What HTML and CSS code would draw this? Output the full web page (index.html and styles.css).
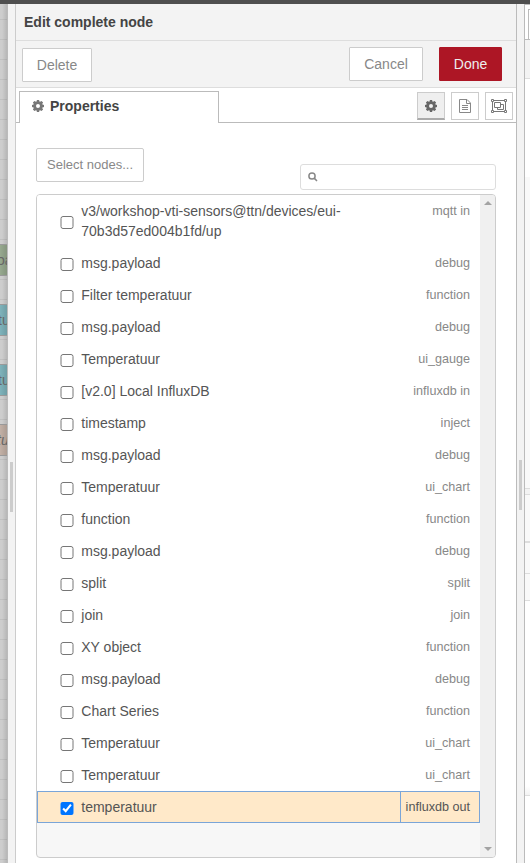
FILE: index.html
```html
<!DOCTYPE html>
<html lang="en">
<head>
<meta charset="utf-8">
<title>Edit complete node</title>
<link rel="stylesheet" href="styles.css">
</head>
<body>
<div class="topbar"></div>
<div class="workspace">
  <div class="canvas">
    <span class="flow-node green">oa</span>
    <span class="flow-node teal">tu</span>
    <span class="flow-node teal second">tu</span>
    <span class="flow-node tan">tu</span>
  </div>
  <div class="separator left"><i class="grip"></i></div>
  <main class="tray">
    <header class="title">Edit complete node</header>
    <div class="toolbar">
      <button class="btn delete">Delete</button>
      <button class="btn cancel">Cancel</button>
      <button class="btn done">Done</button>
    </div>
    <div class="tabs">
      <div class="tab-gap"></div>
      <div class="tab"><svg class="gear" viewBox="0 0 12 12"><use href="#gear"/></svg>Properties</div>
      <div class="tab-actions">
        <span class="icon-btn active"><svg class="gear" viewBox="0 0 12 12"><path id="gear" fill-rule="evenodd" d="M4.900 0h2.200l.3 1.500.7.300L9.500.9 11.100 2.500l-.9 1.400.3.700 1.500.300v2.200l-1.500.300-.3.700.9 1.400-1.600 1.600-1.400-.9-.7.300-.3 1.500H4.900l-.3-1.500-.7-.300-1.400.9L.9 9.500l.9-1.400-.3-.700L0 7.100V4.900l1.500-.300.3-.700L.9 2.500 2.500.9l1.400.9.7-.300zM6 4a2 2 0 1 0 0 4a2 2 0 1 0 0-4z"/></svg></span>
        <span class="icon-btn"><svg class="doc" viewBox="0 0 12 14"><path d="M.5.5h7.500l3.500 3.500v9.500H.5zM7.500.5v4h4M3 6.500h6M3 8.500h6M3 10.500h6"/></svg></span>
        <span class="icon-btn"><svg class="group" viewBox="0 0 16 14"><path d="M2 1.500h12M2 12.500h12M1.500 2v10M14.500 2v10M.5.5h2v2h-2zM13.500.5h2v2h-2zM.5 11.500h2v2h-2zM13.500 11.500h2v2h-2zM3.500 3.500h6v5h-6zM9.500 5.500h3v5h-6v-2"/></svg></span>
      </div>
    </div>
    <section class="content">
      <div class="controls">
        <button class="btn select">Select nodes...</button>
        <div class="search"><svg viewBox="0 0 10 10"><circle cx="4" cy="4" r="3.100"/><path d="M6.400 6.400L9 9"/></svg></div>
      </div>
      <div class="list">
        <div class="rows">
          <label class="row tall"><input type="checkbox"><span class="name">v3/workshop-vti-sensors@ttn/devices/eui-70b3d57ed004b1fd/up</span><span class="type">mqtt in</span></label>
          <label class="row"><input type="checkbox"><span class="name">msg.payload</span><span class="type">debug</span></label>
          <label class="row"><input type="checkbox"><span class="name">Filter temperatuur</span><span class="type">function</span></label>
          <label class="row"><input type="checkbox"><span class="name">msg.payload</span><span class="type">debug</span></label>
          <label class="row"><input type="checkbox"><span class="name">Temperatuur</span><span class="type">ui_gauge</span></label>
          <label class="row"><input type="checkbox"><span class="name">[v2.0] Local InfluxDB</span><span class="type">influxdb in</span></label>
          <label class="row"><input type="checkbox"><span class="name">timestamp</span><span class="type">inject</span></label>
          <label class="row"><input type="checkbox"><span class="name">msg.payload</span><span class="type">debug</span></label>
          <label class="row"><input type="checkbox"><span class="name">Temperatuur</span><span class="type">ui_chart</span></label>
          <label class="row"><input type="checkbox"><span class="name">function</span><span class="type">function</span></label>
          <label class="row"><input type="checkbox"><span class="name">msg.payload</span><span class="type">debug</span></label>
          <label class="row"><input type="checkbox"><span class="name">split</span><span class="type">split</span></label>
          <label class="row"><input type="checkbox"><span class="name">join</span><span class="type">join</span></label>
          <label class="row"><input type="checkbox"><span class="name">XY object</span><span class="type">function</span></label>
          <label class="row"><input type="checkbox"><span class="name">msg.payload</span><span class="type">debug</span></label>
          <label class="row"><input type="checkbox"><span class="name">Chart Series</span><span class="type">function</span></label>
          <label class="row"><input type="checkbox"><span class="name">Temperatuur</span><span class="type">ui_chart</span></label>
          <label class="row"><input type="checkbox"><span class="name">Temperatuur</span><span class="type">ui_chart</span></label>
          <label class="row selected"><input type="checkbox" checked><span class="name">temperatuur</span><span class="type">influxdb out</span></label>
        </div>
        <div class="scrollbar"><i class="up"></i><i class="down"></i></div>
      </div>
    </section>
  </main>
  <div class="separator right"><i class="grip"></i></div>
  <aside class="sidebar">
    <div class="side-tabs"><i></i></div>
    <div class="side-tools"></div>
    <div class="side-blank"></div>
    <div class="side-tree"></div>
    <div class="side-gap"></div>
    <div class="side-head"></div>
    <div class="side-row"></div>
    <div class="side-row short"></div>
    <div class="side-info"></div>
    <div class="side-end"></div>
  </aside>
</div>
</body>
</html>
```
FILE: styles.css
```css
* { box-sizing: border-box; }
body { margin: 0; height: 863px; overflow: hidden; background: #fff; color: #555; font: 14px/20px "Liberation Sans", Arial, sans-serif; }
.topbar { height: 4px; background: #4f4f4f; }
.workspace { display: flex; height: 859px; }

.canvas { position: relative; flex: 0 0 8px; overflow: hidden; border-right: 1px solid #bbb; background: linear-gradient(90deg, transparent 2px, rgba(0,0,0,.11) 7px), repeating-linear-gradient(#cdcdcd 0 15px, #c0c0c0 15px 16px, #cdcdcd 16px 20px); }
.flow-node { position: absolute; left: -10px; top: 240px; width: 18px; height: 32px; padding: 5px 0 0 6px; border: 1px solid #999; color: #666; background: linear-gradient(90deg, transparent 9px, rgba(0,0,0,.12)), #97a98f; }
.flow-node.teal { top: 300px; padding-left: 7px; background-color: #7eb3bb; }
.flow-node.second { top: 360px; }
.flow-node.tan { top: 420px; padding-left: 6px; background-color: #c3b1a6; font-style: italic; }

.separator { flex: 0 0 8px; display: flex; align-items: center; background: #f3f3f3; }
.separator.left { border-right: 1px solid #ccc; }
.separator.right { flex-basis: 9px; border: solid #bbb; border-width: 0 1px; }
.grip { width: 3px; height: 50px; margin: 106px 0 0 2px; background: #ccc; }
.right .grip { margin-top: 102px; }

.tray { flex: 0 0 500px; height: 859px; background: #fff; }
.title { height: 37px; padding: 8px; border-bottom: 1px solid #ddd; background: #f3f3f3; color: #444; font-weight: bold; }
.toolbar { display: flex; height: 47px; padding: 6px 14px 0 6px; border-bottom: 1px solid #ddd; background: #f3f3f3; }
.btn { height: 34px; padding: 0; border: 1px solid #ccc; border-radius: 1px; background: #fff; color: #888; font: 14px/20px "Liberation Sans", Arial, sans-serif; }
.delete { width: 70px; margin: 1px auto 0 0; }
.cancel { width: 74px; margin-right: 16px; }
.done { width: 63px; border-color: #ad1625; background: #ad1625; color: #eee; }

.tabs { display: flex; height: 35px; }
.tab-gap { width: 3px; border-bottom: 1px solid #bbb; }
.tab { display: flex; align-items: center; gap: 6px; width: 200px; height: 32px; margin-top: 3px; padding: 0 0 3px 12px; border: 1px solid #bbb; border-bottom: 0; color: #444; font-weight: bold; }
.gear { width: 12px; height: 12px; fill: #777; }
.tab-actions { display: flex; flex: 1; justify-content: flex-end; gap: 6px; padding: 4px 3px 0 0; border-bottom: 1px solid #bbb; }
.icon-btn { display: flex; align-items: center; justify-content: center; width: 28px; height: 28px; border: 1px solid #ccc; }
.icon-btn.active { border-bottom: 2px solid #aaa; background: #efefef; }
.icon-btn .gear { fill: #666; }
.doc { width: 12px; height: 14px; fill: none; stroke: #888; }
.group { width: 16px; height: 14px; fill: none; stroke: #777; }

.content { padding: 25px 20px 0; }
.controls { display: flex; justify-content: space-between; height: 46px; }
.select { width: 108px; border-radius: 2px; font-size: 13px; }
.search { display: flex; align-items: center; width: 196px; height: 26px; margin-top: 16px; padding-left: 7px; border: 1px solid #ddd; border-radius: 3px; }
.search svg { width: 10px; height: 10px; fill: none; stroke: #888; stroke-width: 1.5; }
.list { display: flex; width: 460px; height: 664px; overflow: hidden; border: 1px solid #ccc; border-radius: 4px; background: #f7f7f7; }
.rows { flex: 1; }
.row { display: flex; align-items: center; height: 32px; background: #fff; }
.row input { flex: none; width: 13.5px; height: 13px; margin: 3px 7.4px 0 23.4px; }
.name { flex: 1; }
.type { align-self: flex-start; padding: 6px 10px 0 5px; color: #888; font-size: 12.6px; }
.tall { height: 52px; }
.tall .name { padding-right: 70px; }
.row.selected { border: 1px solid #7aa5d8; background: #ffe9c9; }
.selected input { margin-left: 22.4px; }
.selected .type { align-self: stretch; padding: 5px 9px 0 4.7px; border-left: 1px solid #7aa5d8; color: #555; }
.scrollbar { display: flex; flex-direction: column; align-items: flex-start; justify-content: space-between; width: 15px; padding: 6px 0 6px 3.5px; background: #f0f0f0; }
.up, .down { border: 4px solid transparent; border-top: 0; border-bottom-color: #a3a3a3; }
.down { border-bottom: 0; border-top: 4px solid #a3a3a3; }

.sidebar { flex: 0 0 5px; background: #fff; }
.side-tabs { height: 36px; padding: 4px 0 0 3px; border-top: 1px solid #bbb; border-bottom: 1px solid #bbb; }
.side-tabs i { display: block; height: 32px; border: solid #bbb; border-width: 1px 0 0 1px; }
.side-tools { height: 39px; border-bottom: 1px solid #ddd; background: #f3f3f3; }
.side-blank { height: 98px; }
.side-tree { height: 312px; background: #f9f9f9; border-bottom: 1px solid #ddd; }
.side-gap { height: 6px; border-bottom: 1px solid #ddd; background: #f3f3f3; }
.side-head { height: 48px; border-bottom: 2px solid #ddd; background: #f9f9f9; }
.side-row { height: 31px; border-bottom: 1px solid #ddd; background: #f9f9f9; }
.side-row.short { height: 27px; }
.side-info { height: 195px; border-bottom: 1px solid #ddd; background: linear-gradient(#fff 185px, #f3f3f3); }
```
